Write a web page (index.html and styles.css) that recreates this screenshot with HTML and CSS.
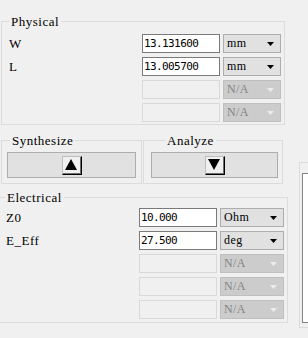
FILE: index.html
```
<!DOCTYPE html>
<html>
<head>
<meta charset="utf-8">
<link rel="stylesheet" href="styles.css">
</head>
<body>
<div class="app">
  <div class="left">
    <fieldset class="group physical">
      <legend>Physical</legend>
      <div class="rows">
        <span class="lbl">W</span>
        <div class="entry">13.131600</div>
        <div class="combo"><span>mm</span><svg class="arrow" width="7" height="4" viewBox="0 0 7 4"><polygon points="0,0 7,0 3.5,4"/></svg></div>
        <span class="lbl">L</span>
        <div class="entry">13.005700</div>
        <div class="combo"><span>mm</span><svg class="arrow" width="7" height="4" viewBox="0 0 7 4"><polygon points="0,0 7,0 3.5,4"/></svg></div>
        <span class="lbl"></span>
        <div class="entry disabled"></div>
        <div class="combo disabled"><span>N/A</span><svg class="arrow" width="7" height="4" viewBox="0 0 7 4"><polygon points="0,0 7,0 3.5,4"/></svg></div>
        <span class="lbl"></span>
        <div class="entry disabled"></div>
        <div class="combo disabled"><span>N/A</span><svg class="arrow" width="7" height="4" viewBox="0 0 7 4"><polygon points="0,0 7,0 3.5,4"/></svg></div>
      </div>
    </fieldset>
    <div class="actions">
      <fieldset class="group synth">
        <legend>Synthesize</legend>
        <div class="btn"><span class="tri"><svg width="12" height="11" viewBox="0 0 12 11"><polygon points="6,0 12,11 0,11"/></svg></span></div>
      </fieldset>
      <fieldset class="group analyze">
        <legend>Analyze</legend>
        <div class="btn"><span class="tri"><svg width="12" height="11" viewBox="0 0 12 11"><polygon points="0,0 12,0 6,11"/></svg></span></div>
      </fieldset>
    </div>
    <fieldset class="group electrical">
      <legend>Electrical</legend>
      <div class="rows">
        <span class="lbl">Z0</span>
        <div class="entry">10.000</div>
        <div class="combo"><span>Ohm</span><svg class="arrow" width="7" height="4" viewBox="0 0 7 4"><polygon points="0,0 7,0 3.5,4"/></svg></div>
        <span class="lbl">E_Eff</span>
        <div class="entry">27.500</div>
        <div class="combo"><span>deg</span><svg class="arrow" width="7" height="4" viewBox="0 0 7 4"><polygon points="0,0 7,0 3.5,4"/></svg></div>
        <span class="lbl"></span>
        <div class="entry disabled"></div>
        <div class="combo disabled"><span>N/A</span><svg class="arrow" width="7" height="4" viewBox="0 0 7 4"><polygon points="0,0 7,0 3.5,4"/></svg></div>
        <span class="lbl"></span>
        <div class="entry disabled"></div>
        <div class="combo disabled"><span>N/A</span><svg class="arrow" width="7" height="4" viewBox="0 0 7 4"><polygon points="0,0 7,0 3.5,4"/></svg></div>
        <span class="lbl"></span>
        <div class="entry disabled"></div>
        <div class="combo disabled"><span>N/A</span><svg class="arrow" width="7" height="4" viewBox="0 0 7 4"><polygon points="0,0 7,0 3.5,4"/></svg></div>
      </div>
    </fieldset>
  </div>
  <div class="right">
    <div class="panel"><div class="panel-inner"></div></div>
  </div>
</div>
</body>
</html>
```
FILE: styles.css
```
* { box-sizing: border-box; }
html, body {
  margin: 0;
  padding: 0;
  background: #f0f0f0;
  width: 308px;
  height: 338px;
  overflow: hidden;
}
body {
  font-family: "Liberation Serif", "DejaVu Serif", serif;
  font-size: 13px;
  color: #000;
}
.app {
  display: flex;
  width: 308px;
  height: 338px;
}
.left {
  width: 290px;
  flex: none;
  display: flex;
  flex-direction: column;
}
.group {
  margin: 0;
  padding: 0;
  border: 1px solid #dcdcdc;
  min-width: 0;
}
.group legend {
  padding: 0 2px;
  line-height: 15px;
  height: 15px;
  font-size: 13px;
  letter-spacing: 0.5px;
  white-space: nowrap;
}
.rows {
  display: grid;
  grid-auto-rows: 19px;
  row-gap: 4px;
  column-gap: 3px;
  align-items: stretch;
}
.lbl {
  padding-left: 7px;
  display: flex;
  align-items: center;
  letter-spacing: 0.5px;
  white-space: pre;
}
.entry {
  background: #fff;
  border: 1px solid #7a7a7a;
  font-family: "DejaVu Sans Mono", monospace;
  font-size: 11px;
  letter-spacing: -0.6px;
  padding-left: 1px;
  display: flex;
  align-items: center;
}
.entry.disabled {
  background: #f0f0f0;
  border-color: #d9d9d9;
}
.combo {
  background: #e1e1e1;
  border: 1px solid #adadad;
  display: flex;
  align-items: center;
  justify-content: space-between;
  padding: 0 6px 0 3px;
  font-size: 12px;
  letter-spacing: 0.4px;
}
.combo .arrow { fill: #000; display: block; }
.combo.disabled {
  background: #cccccc;
  border-color: #bfbfbf;
  color: #838383;
}
.combo.disabled .arrow { fill: #ececec; }

/* Physical */
.physical {
  margin: 14px 0 0 1px;
  width: 284px;
}
.physical legend { margin-left: 7px; }
.physical .rows {
  grid-template-columns: 137px 78px 58px;
  padding: 5px 3px 2px 0;
}

/* Actions */
.actions {
  display: flex;
  gap: 1px;
  margin: 8px 0 0 1px;
}
.synth { width: 141px; padding: 4px 5px 5px 5px; }
.synth legend { margin-left: 3px; }
.analyze { width: 140px; padding: 4px 4px 5px 7px; }
.analyze legend { margin-left: 14px; }
.btn {
  height: 26px;
  background: #e1e1e1;
  border: 1px solid #adadad;
  display: flex;
  align-items: center;
  justify-content: center;
}
.tri {
  width: 20px;
  height: 19px;
  background: #f0f0f0;
  border: 1px solid;
  border-color: #bdbdbd #000 #000 #bdbdbd;
  box-shadow: inset -1px -1px 0 #6d6d6d;
  display: flex;
  align-items: center;
  justify-content: center;
  padding: 0 1px 1px 0;
}
.tri svg { display: block; fill: #000; }

/* Electrical */
.electrical {
  margin: 6px 0 0 -2px;
  width: 290px;
}
.electrical legend { margin-left: 6px; }
.electrical .rows {
  grid-template-columns: 137px 78px 64px;
  padding: 3px 3px 3px 0;
}

/* right partial panel */
.right {
  flex: 1;
  min-width: 0;
  padding: 162px 0 0 9px;
}
.panel {
  height: 166px;
  border: 1px solid #dcdcdc;
  border-right: none;
  padding: 10px 0 0 2px;
}
.panel-inner {
  height: 150px;
  background: #fff;
  border: 1px solid #828282;
  border-right: none;
}
```
